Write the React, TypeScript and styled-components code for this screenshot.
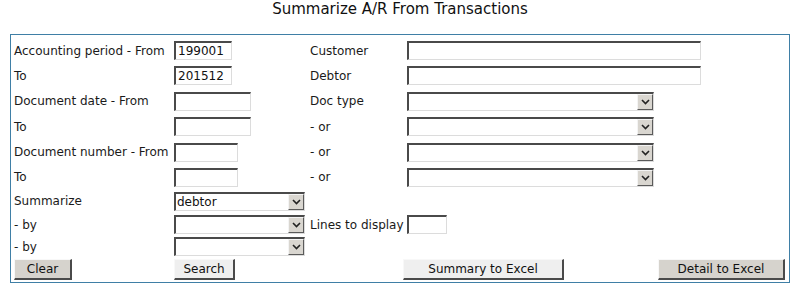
import React from 'react';
import styled, { createGlobalStyle } from 'styled-components';

const GlobalStyle = createGlobalStyle`
  html, body {
    margin: 0;
    padding: 0;
    background: #ffffff;
  }
  body {
    font-family: "DejaVu Sans", Verdana, sans-serif;
    font-size: 12px;
    color: #1a1a1a;
  }
`;

const Title = styled.h1`
  margin: 0;
  height: 34px;
  font-size: 15px;
  font-weight: normal;
  line-height: 18px;
  text-align: center;
  color: #111;
`;

const Panel = styled.form`
  margin: 0 10px;
  padding: 3px 4px 1px 3px;
  border: 1px solid #3f7fa6;
  display: grid;
  grid-template-columns: 160px 136px 97px 1fr;
  grid-template-rows: 25px 25px 26px 25px 26px 24px 24px 23px 21px 24px;
  align-items: center;
`;

const Label = styled.label`
  white-space: nowrap;
  line-height: 14px;
`;

const Cell = styled.div`
  display: flex;
  align-items: center;
`;

const TextInput = styled.input<{ $w: number }>`
  box-sizing: border-box;
  width: ${(p) => p.$w}px;
  height: 19px;
  margin: 0;
  padding: 0 2px;
  font: inherit;
  font-size: 12px;
  color: #111;
  background: #fff;
  border-style: solid;
  border-width: 2px 1px 1px 2px;
  border-color: #4a4a4a #dcdcdc #dcdcdc #4a4a4a;
  outline: none;
`;

const SelectBox = styled.div<{ $w: number }>`
  box-sizing: border-box;
  width: ${(p) => p.$w}px;
  height: 19px;
  display: flex;
  align-items: stretch;
  background: #fff;
  border-style: solid;
  border-width: 2px 1px 1px 2px;
  border-color: #4a4a4a #dcdcdc #dcdcdc #4a4a4a;
`;

const NativeSelect = styled.select`
  flex: 1;
  min-width: 0;
  appearance: none;
  -webkit-appearance: none;
  border: none;
  margin: 0;
  padding: 0 1px;
  font: inherit;
  font-size: 12px;
  color: #111;
  background: transparent;
  outline: none;
`;

const ArrowBox = styled.span`
  box-sizing: border-box;
  width: 16px;
  display: flex;
  align-items: center;
  justify-content: center;
  background: #d9d6d0;
  border-style: solid;
  border-width: 1px;
  border-color: #f4f4f4 #5a5a5a #5a5a5a #f4f4f4;
`;

const ButtonRow = styled.div`
  grid-column: 1 / -1;
  display: grid;
  grid-template-columns: 160px 229px 1fr auto;
  align-items: center;
`;

const Button = styled.button<{ $w: number; $light?: boolean }>`
  box-sizing: border-box;
  width: ${(p) => p.$w}px;
  height: 21px;
  margin: 0;
  padding: 0;
  font: inherit;
  font-size: 12px;
  color: #111;
  background: ${(p) => (p.$light ? '#efefef' : '#d6d3cd')};
  border-style: solid;
  border-width: 1px 2px 2px 1px;
  border-color: #f8f8f8 #4a4a4a #4a4a4a #f8f8f8;
`;

const Chevron = () => (
  <svg width="9" height="6" viewBox="0 0 9 6">
    <path d="M1 1 L4.5 4.5 L8 1" fill="none" stroke="#222" strokeWidth="1.6" />
  </svg>
);

function Select({ w, value }: { w: number; value?: string }) {
  return (
    <SelectBox $w={w}>
      <NativeSelect defaultValue={value ?? ''}>
        <option value={value ?? ''}>{value ?? ''}</option>
      </NativeSelect>
      <ArrowBox>
        <Chevron />
      </ArrowBox>
    </SelectBox>
  );
}

export default function App() {
  return (
    <>
      <GlobalStyle />
      <Title>Summarize A/R From Transactions</Title>
      <Panel>
        <Label>Accounting period - From</Label>
        <Cell><TextInput $w={58} defaultValue="199001" /></Cell>
        <Label>Customer</Label>
        <Cell><TextInput $w={294} /></Cell>

        <Label>To</Label>
        <Cell><TextInput $w={58} defaultValue="201512" /></Cell>
        <Label>Debtor</Label>
        <Cell><TextInput $w={294} /></Cell>

        <Label>Document date - From</Label>
        <Cell><TextInput $w={77} /></Cell>
        <Label>Doc type</Label>
        <Cell><Select w={247} /></Cell>

        <Label>To</Label>
        <Cell><TextInput $w={77} /></Cell>
        <Label>- or</Label>
        <Cell><Select w={247} /></Cell>

        <Label>Document number - From</Label>
        <Cell><TextInput $w={64} /></Cell>
        <Label>- or</Label>
        <Cell><Select w={247} /></Cell>

        <Label>To</Label>
        <Cell><TextInput $w={64} /></Cell>
        <Label>- or</Label>
        <Cell><Select w={247} /></Cell>

        <Label>Summarize</Label>
        <Cell><Select w={131} value="debtor" /></Cell>
        <span />
        <span />

        <Label>- by</Label>
        <Cell><Select w={131} /></Cell>
        <Label>Lines to display</Label>
        <Cell><TextInput $w={40} /></Cell>

        <Label>- by</Label>
        <Cell><Select w={131} /></Cell>
        <span />
        <span />

        <ButtonRow>
          <Button type="button" $w={58}>Clear</Button>
          <Button type="button" $w={61} $light>Search</Button>
          <Button type="button" $w={161} $light>Summary to Excel</Button>
          <Button type="button" $w={127}>Detail to Excel</Button>
        </ButtonRow>
      </Panel>
    </>
  );
}
